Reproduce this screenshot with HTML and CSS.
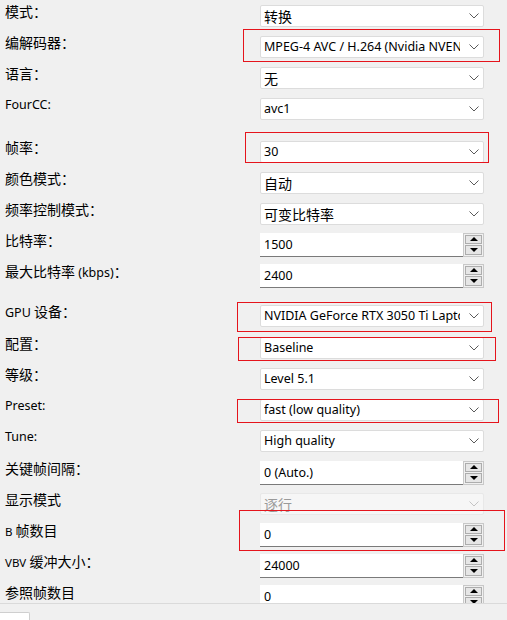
FILE: index.html
```html
<!DOCTYPE html>
<html lang="zh">
<head>
<meta charset="utf-8">
<title>编码设置</title>
<link rel="stylesheet" href="styles.css">
</head>
<body>
<div class="scroll">
  <div class="form">
    <div class="row"><span class="label">模式：</span><div class="combo"><span class="val cjk">转换</span><svg class="chev" viewBox="0 0 10 6"><polyline points="0.5,0.5 5,5 9.5,0.5"/></svg></div></div>
    <div class="row"><span class="label">编解码器：</span><div class="combo"><span class="val">MPEG-4 AVC / H.264 (Nvidia NVENC)</span><svg class="chev" viewBox="0 0 10 6"><polyline points="0.5,0.5 5,5 9.5,0.5"/></svg></div></div>
    <div class="row"><span class="label">语言：</span><div class="combo"><span class="val cjk">无</span><svg class="chev" viewBox="0 0 10 6"><polyline points="0.5,0.5 5,5 9.5,0.5"/></svg></div></div>
    <div class="row"><span class="label lat">FourCC:</span><div class="combo"><span class="val">avc1</span><svg class="chev" viewBox="0 0 10 6"><polyline points="0.5,0.5 5,5 9.5,0.5"/></svg></div></div>
    <div class="row gap12"><span class="label">帧率：</span><div class="combo"><span class="val">30</span><svg class="chev" viewBox="0 0 10 6"><polyline points="0.5,0.5 5,5 9.5,0.5"/></svg></div></div>
    <div class="row"><span class="label">颜色模式：</span><div class="combo"><span class="val cjk">自动</span><svg class="chev" viewBox="0 0 10 6"><polyline points="0.5,0.5 5,5 9.5,0.5"/></svg></div></div>
    <div class="row"><span class="label">频率控制模式：</span><div class="combo"><span class="val cjk">可变比特率</span><svg class="chev" viewBox="0 0 10 6"><polyline points="0.5,0.5 5,5 9.5,0.5"/></svg></div></div>
    <div class="row"><span class="label">比特率：</span><div class="spin"><span class="field">1500</span><div class="btns"><span class="btn"><i class="up"></i></span><span class="btn"><i class="down"></i></span></div></div></div>
    <div class="row"><span class="label">最大比特率 <span class="lat">(kbps)</span>：</span><div class="spin"><span class="field">2400</span><div class="btns"><span class="btn"><i class="up"></i></span><span class="btn"><i class="down"></i></span></div></div></div>
    <div class="row gap9"><span class="label"><span class="lat">GPU</span> 设备：</span><div class="combo"><span class="val">NVIDIA GeForce RTX 3050 Ti Laptop GPU</span><svg class="chev" viewBox="0 0 10 6"><polyline points="0.5,0.5 5,5 9.5,0.5"/></svg></div></div>
    <div class="row gap1"><span class="label">配置：</span><div class="combo"><span class="val">Baseline</span><svg class="chev" viewBox="0 0 10 6"><polyline points="0.5,0.5 5,5 9.5,0.5"/></svg></div></div>
    <div class="row"><span class="label">等级：</span><div class="combo"><span class="val">Level 5.1</span><svg class="chev" viewBox="0 0 10 6"><polyline points="0.5,0.5 5,5 9.5,0.5"/></svg></div></div>
    <div class="row"><span class="label lat">Preset:</span><div class="combo"><span class="val">fast (low quality)</span><svg class="chev" viewBox="0 0 10 6"><polyline points="0.5,0.5 5,5 9.5,0.5"/></svg></div></div>
    <div class="row"><span class="label lat">Tune:</span><div class="combo"><span class="val">High quality</span><svg class="chev" viewBox="0 0 10 6"><polyline points="0.5,0.5 5,5 9.5,0.5"/></svg></div></div>
    <div class="row gap1"><span class="label">关键帧间隔：</span><div class="spin"><span class="field">0 (Auto.)</span><div class="btns"><span class="btn"><i class="up"></i></span><span class="btn"><i class="down"></i></span></div></div></div>
    <div class="row"><span class="label">显示模式</span><div class="combo disabled"><span class="val cjk">逐行</span><svg class="chev" viewBox="0 0 10 6"><polyline points="0.5,0.5 5,5 9.5,0.5"/></svg></div></div>
    <div class="row"><span class="label"><span class="lat small">B</span> 帧数目</span><div class="spin"><span class="field">0</span><div class="btns"><span class="btn"><i class="up"></i></span><span class="btn"><i class="down"></i></span></div></div></div>
    <div class="row"><span class="label"><span class="lat small">VBV</span> 缓冲大小：</span><div class="spin"><span class="field">24000</span><div class="btns"><span class="btn"><i class="up"></i></span><span class="btn"><i class="down"></i></span></div></div></div>
    <div class="row"><span class="label">参照帧数目</span><div class="spin"><span class="field">0</span><div class="btns"><span class="btn"><i class="up"></i></span><span class="btn"><i class="down"></i></span></div></div></div>
  </div>
</div>
<div class="footer"><div class="tab"></div></div>

<div class="mark mark-codec"></div>
<div class="mark mark-fps"></div>
<div class="mark mark-gpu"></div>
<div class="mark mark-profile"></div>
<div class="mark mark-preset"></div>
<div class="mark mark-bframes"></div>
</body>
</html>
```
FILE: styles.css
```css
html, body {
  margin: 0;
  padding: 0;
}
body {
  width: 507px;
  height: 620px;
  overflow: hidden;
  background: #f0f0f0;
  color: #000;
  font-family: "Noto Sans", "Noto Sans CJK SC", sans-serif;
  font-size: 12.5px;
  position: relative;
}
.scroll {
  height: 603px;
  overflow: hidden;
  border-bottom: 1px solid #dadada;
}
.form {
  padding-left: 5px;
}
.row {
  display: flex;
  align-items: center;
  height: 31px;
}
.gap12 { margin-top: 12px; }
.gap9 { margin-top: 9px; }
.gap1 { margin-top: 1px; }
.label {
  width: 255px;
  flex: none;
  align-self: flex-start;
  line-height: 23px;
  font-family: "Noto Sans CJK SC", sans-serif;
  font-size: 14px;
  white-space: nowrap;
}
.label.lat, .lat {
  font-family: "Noto Sans", "Noto Sans CJK SC", sans-serif;
  font-size: 12.5px;
}
.lat.small { font-size: 11.5px; }
.combo {
  width: 224px;
  height: 22px;
  box-sizing: border-box;
  border: 1px solid #dcdcdc;
  border-radius: 2px;
  background: #fff;
  display: flex;
  align-items: center;
  padding: 0 4px 0 3px;
}
.val {
  flex: 1;
  min-width: 0;
  overflow: hidden;
  white-space: nowrap;
  margin-right: 9px;
  font-family: "Noto Sans", "Noto Sans CJK SC", sans-serif;
  font-size: 12.5px;
  line-height: 20px;
}
.val.cjk {
  font-family: "Noto Sans CJK SC", sans-serif;
  font-size: 14px;
}
.chev {
  width: 10px;
  height: 6px;
  flex: none;
  fill: none;
  stroke: #5a5a5a;
  stroke-width: 1;
}
.combo.disabled {
  background: #f6f6f6;
  border-color: #e8e8e8;
}
.combo.disabled .val { color: #9a9a9a; }
.combo.disabled .chev { stroke: #c4c4c4; }
.spin {
  width: 224px;
  height: 24px;
  display: flex;
}
.field {
  flex: 1;
  background: #fff;
  border-bottom: 1px solid #7a7a7a;
  box-sizing: border-box;
  padding-left: 4px;
  line-height: 23px;
  white-space: nowrap;
}
.btns {
  width: 21px;
  flex: none;
  box-sizing: border-box;
  border: 1px solid #c8c8c8;
  padding: 1px;
  display: flex;
  flex-direction: column;
  gap: 1px;
  background: #f0f0f0;
}
.btn {
  flex: 1;
  border: 1px solid #adadad;
  background: #e6e6e6;
  display: flex;
  align-items: center;
  justify-content: center;
}
.up, .down {
  width: 0;
  height: 0;
  border-left: 4px solid transparent;
  border-right: 4px solid transparent;
}
.up { border-bottom: 4px solid #000; }
.down { border-top: 4px solid #000; }
.footer {
  height: 16px;
  position: relative;
}
.tab {
  margin-top: 8px;
  width: 29px;
  height: 10px;
  background: #fff;
  border-top: 1px solid #cfcfcf;
  border-right: 1px solid #cfcfcf;
  border-top-right-radius: 2px;
}
.mark {
  position: absolute;
  border: 1px solid #e5141c;
  box-sizing: border-box;
  pointer-events: none;
}
.mark-codec { left: 243px; top: 29px; width: 257px; height: 33px; }
.mark-fps { left: 245px; top: 132px; width: 244px; height: 31px; }
.mark-gpu { left: 237px; top: 302px; width: 255px; height: 30px; }
.mark-profile { left: 238px; top: 337px; width: 258px; height: 24px; }
.mark-preset { left: 237px; top: 399px; width: 262px; height: 24px; }
.mark-bframes { left: 239px; top: 510px; width: 266px; height: 41px; }
```
